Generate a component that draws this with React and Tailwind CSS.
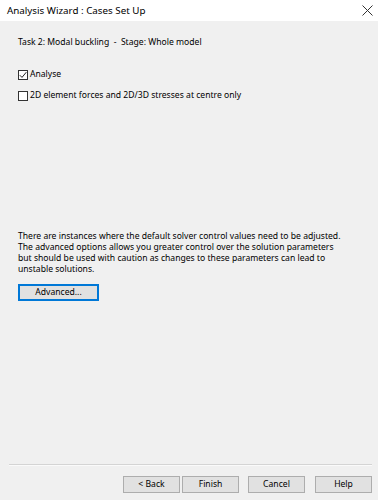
import React from "react";

const font = { fontFamily: '"Noto Sans", "Open Sans", sans-serif' };

const Checkbox = ({ checked, label, className = "" }) => (
  <label className={`flex items-center gap-[2px] ${className}`}>
    <span className="w-[10px] h-[10px] border border-[#333] bg-white flex items-center justify-center">
      {checked && (
        <svg width="8" height="8" viewBox="0 0 8 8">
          <path d="M0.8 4.2 L3 6.4 L7.3 1.2" fill="none" stroke="#222" strokeWidth="1" />
        </svg>
      )}
    </span>
    <span>{label}</span>
  </label>
);

const DlgButton = ({ children }) => (
  <button className="w-[57px] h-[17px] bg-[#e1e1e1] border border-[#adadad] text-[8.6px] leading-none text-black">
    {children}
  </button>
);

export default function App() {
  return (
    <div className="w-[378px] h-[500px] bg-[#f0f0f0] flex flex-col text-black text-[8.6px] leading-[11px]" style={font}>
      {/* title bar */}
      <div className="h-[21px] bg-white flex items-center justify-between pl-[7px] pr-[5px] text-[9.8px]">
        <span>Analysis Wizard : Cases Set Up</span>
        <svg width="11" height="11" viewBox="0 0 11 11">
          <path d="M0.5 0.5 L10.5 10.5 M10.5 0.5 L0.5 10.5" stroke="#333" strokeWidth="1" />
        </svg>
      </div>

      <div className="flex-1 flex flex-col px-[18px]">
        <div className="mt-[16px]">Task 2: Modal buckling&nbsp; -&nbsp; Stage: Whole model</div>

        <Checkbox checked label="Analyse" className="mt-[21px]" />
        <Checkbox label="2D element forces and 2D/3D stresses at centre only" className="mt-[10px]" />

        <div className="mt-[130px]">
          <p>There are instances where the default solver control values need to be adjusted.</p>
          <p>The advanced options allows you greater control over the solution parameters</p>
          <p>but should be used with caution as changes to these parameters can lead to</p>
          <p>unstable solutions.</p>
        </div>

        <button className="mt-[9px] w-[81px] h-[17px] border-2 border-[#0078d7] bg-[#e1e1e1] text-[8.6px] leading-none">
          Advanced...
        </button>
      </div>

      <div className="ml-[9px] mr-[6px] h-[2px] bg-[#d4d4d4] border-b border-[#fafafa]" />

      <div className="flex justify-end pr-[6px] pt-[10px] pb-[7px]">
        <DlgButton>&lt; Back</DlgButton>
        <div className="w-[2px]" />
        <DlgButton>Finish</DlgButton>
        <div className="w-[9px]" />
        <DlgButton>Cancel</DlgButton>
        <div className="w-[10px]" />
        <DlgButton>Help</DlgButton>
      </div>
    </div>
  );
}
